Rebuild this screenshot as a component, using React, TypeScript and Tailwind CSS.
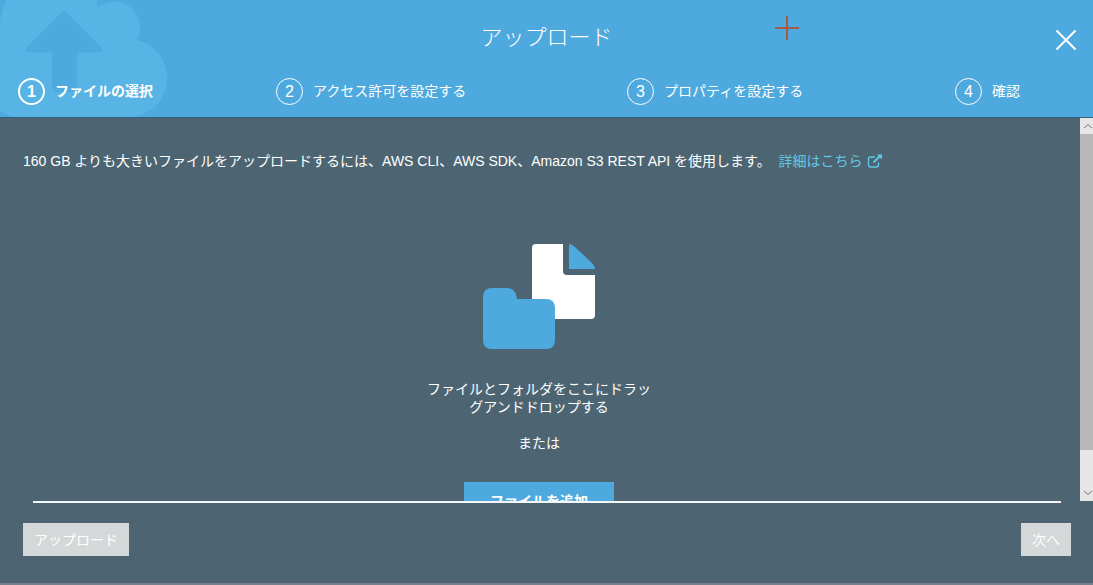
import { useState } from "react";
import clsx from "clsx";

const STEPS = [
  { id: 1, label: "ファイルの選択" },
  { id: 2, label: "アクセス許可を設定する" },
  { id: 3, label: "プロパティを設定する" },
  { id: 4, label: "確認" },
];

function CloudUploadArt() {
  return (
    <svg
      aria-hidden="true"
      className="pointer-events-none absolute left-0 top-0"
      width="170"
      height="117"
      viewBox="0 0 170 117"
    >
      <path
        fill="#57b4e4"
        d="M6 0H97V8A26 26 0 0 1 137 40A39 39 0 0 1 128 117H16C10 117 4 114 0 110V24C1 14 3 7 6 0Z"
      />
      <path
        fill="#4ea9de"
        d="M61.5 12.5Q64 10 66.500 12.500L101 47Q104 51.500 100 52.500H77V86Q77 92 71 92H58Q52 92 52 86V52.500H28Q24 51.500 27 47Z"
      />
    </svg>
  );
}

function FilesArt() {
  return (
    <svg
      aria-hidden="true"
      className="mt-[74px] shrink-0"
      width="112"
      height="105"
      viewBox="0 0 112 105"
    >
      <path
        fill="#fff"
        d="M53 0H80V27Q80 31 84 31H112V71Q112 75 108 75H53Q49 75 49 71V4Q49 0 53 0Z"
      />
      <path fill="#4ea9de" d="M86 0Q89 0 92 3L109 19Q112 22 112 25H86Z" />
      <path
        fill="#4ea9de"
        d="M9 44H24Q33 44 34 55H63Q72 55 72 64V96Q72 105 63 105H9Q0 105 0 96V53Q0 44 9 44Z"
      />
    </svg>
  );
}

function ExternalIcon() {
  return (
    <svg
      aria-hidden="true"
      className="ml-1 inline-block align-[-2px]"
      width="16"
      height="14"
      viewBox="0 0 16 14"
      fill="none"
      stroke="currentColor"
      strokeWidth="1.300"
    >
      <path d="M8 3H3.500Q1.500 3 1.500 5V11Q1.500 13 3.500 13H9.500Q11.500 13 11.500 11V8.500" />
      <path d="M6.500 8.500L13 2" strokeWidth="1.800" />
      <path d="M10 0.500H15V5.500Z" fill="currentColor" stroke="none" />
    </svg>
  );
}

function Scrollbar() {
  return (
    <div
      aria-hidden="true"
      className="flex w-[13px] shrink-0 flex-col bg-[#e6e6e6] text-[#777]"
    >
      <svg className="h-4 w-full" viewBox="0 0 13 16" fill="none" stroke="currentColor">
        <path d="M4 10L8 6.500L12 10" />
      </svg>
      <div className="flex min-h-0 flex-1 flex-col">
        <div className="flex-[9] bg-[#b8b8b8]" />
        <div className="flex-1" />
      </div>
      <svg className="h-4 w-full" viewBox="0 0 13 16" fill="none" stroke="currentColor">
        <path d="M4 6L8 9.500L12 6" />
      </svg>
    </div>
  );
}

export default function App() {
  const [step, setStep] = useState(1);

  return (
    <div className="flex h-screen flex-col border-b-2 border-[#767f8b] bg-[#4d6572] font-['Liberation_Sans','Noto_Sans_CJK_JP',sans-serif] text-sm leading-[18px] text-white">
      <header className="relative shrink-0 border-b border-[#2f6382] bg-[#4ea9de]">
        <CloudUploadArt />
        <h1 className="relative pt-[22px] text-center text-[22px] font-light leading-8">
          アップロード
        </h1>
        <svg
          aria-hidden="true"
          className="absolute left-[72%] top-4 -translate-x-1/2"
          width="24"
          height="24"
          viewBox="0 0 24 24"
          stroke="#a65a48"
          strokeWidth="2"
        >
          <path d="M12 0V24M0 12H24" />
        </svg>
        <button
          type="button"
          aria-label="閉じる"
          className="absolute right-4 top-[29px]"
        >
          <svg
            width="22"
            height="22"
            viewBox="0 0 22 22"
            stroke="currentColor"
            strokeWidth="2"
            strokeLinecap="round"
          >
            <path d="M2 2L20 20M20 2L2 20" />
          </svg>
        </button>
        <nav className="relative mt-6 grid grid-cols-[258fr_351fr_328fr_138fr] pb-3 pl-[18px]">
          {STEPS.map((item) => (
            <button
              key={item.id}
              type="button"
              onClick={() => setStep(item.id)}
              className={clsx(
                "flex items-center gap-2.5 text-left",
                item.id === step && "font-bold",
              )}
            >
              <span
                className={clsx(
                  "flex size-[27px] shrink-0 items-center justify-center rounded-full border-white text-base",
                  item.id === step ? "border-2" : "border",
                )}
              >
                {item.id}
              </span>
              <span className="pb-0.5">{item.label}</span>
            </button>
          ))}
        </nav>
      </header>

      <div className="flex min-h-0 flex-1">
        <main className="flex min-w-0 flex-1 flex-col overflow-hidden pt-[34px]">
          <p className="px-[23px]">
            160 GB よりも大きいファイルをアップロードするには、AWS CLI、AWS SDK、Amazon S3 REST API を使用します。{" "}
            <a href="#more" className="ml-1 text-[#62c8ea]">
              詳細はこちら
              <ExternalIcon />
            </a>
          </p>
          <div className="flex flex-col items-center pr-0.5 text-center">
            <FilesArt />
            <p className="mt-[31px] w-[228px]">
              ファイルとフォルダをここにドラッグアンドドロップする
            </p>
            <p className="mt-[18px]">または</p>
            <button
              type="button"
              className="mt-[30px] h-[38px] w-[150px] shrink-0 bg-[#4ea9de] font-bold"
            >
              ファイルを追加
            </button>
          </div>
        </main>
        <Scrollbar />
      </div>

      <footer className="shrink-0">
        <div className="ml-[33px] mr-8 h-0.5 bg-[#f4f6f7]" />
        <div className="flex justify-between pb-[27px] pl-[23px] pr-[22px] pt-5">
          <button type="button" className="h-[33px] bg-[#d5d8d8] px-[11px]">
            アップロード
          </button>
          <button type="button" className="h-[33px] bg-[#d5d8d8] px-[11px]">
            次へ
          </button>
        </div>
      </footer>
    </div>
  );
}
